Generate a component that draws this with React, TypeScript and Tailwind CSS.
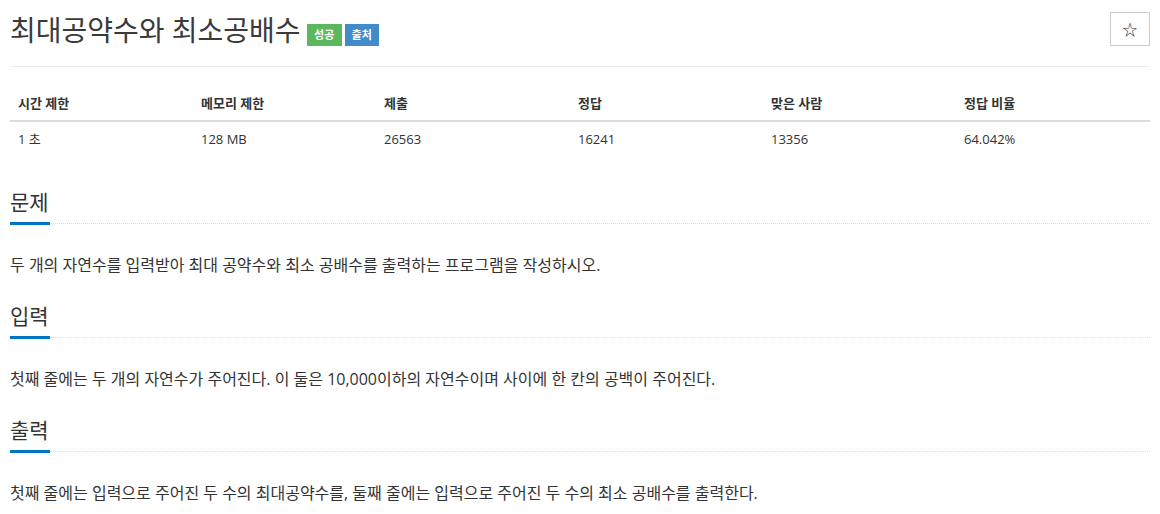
import React from "react";

const COLS = [
  { head: "시간 제한", value: "1 초", w: "w-[183px]" },
  { head: "메모리 제한", value: "128 MB", w: "w-[183px]" },
  { head: "제출", value: "26563", w: "w-[194px]" },
  { head: "정답", value: "16241", w: "w-[193px]" },
  { head: "맞은 사람", value: "13356", w: "w-[193px]" },
  { head: "정답 비율", value: "64.042%", w: "flex-1" },
];

function Section({ title, text, first }: { title: string; text: string; first?: boolean }) {
  return (
    <section className={first ? "mt-[32px]" : "mt-[25px]"}>
      <div className="flex items-end">
        <h2 className="text-[21px] leading-[28px] text-[#333] pb-[6px] border-b-[3px] border-[#0076c0] w-[40px] whitespace-nowrap">
          {title}
        </h2>
        <div className="flex-1 border-b border-dotted border-[#ddd] mb-[1px]" />
      </div>
      <p className="mt-[28px] text-[16px] leading-[24px] text-[#333]">{text}</p>
    </section>
  );
}

export default function App() {
  return (
    <div
      className="bg-white px-[10px] pt-[12px] text-[#333]"
      style={{ fontFamily: '"Open Sans", "Noto Sans CJK KR", sans-serif' }}
    >
      {/* Title */}
      <div className="flex items-start justify-between pb-[18px] border-b border-[#eee]">
        <div className="flex items-start gap-[6px]">
          <h1 className="text-[28px] leading-[36px] text-[#3a3a3a]">최대공약수와 최소공배수</h1>
          <div className="flex gap-[3px] mt-[12px]">
            <span className="bg-[#5cb85c] text-white text-[11px] font-bold leading-[22px] w-[35px] text-center">
              성공
            </span>
            <span className="bg-[#428bca] text-white text-[11px] font-bold leading-[22px] w-[34px] text-center">
              출처
            </span>
          </div>
        </div>
        <button className="w-[40px] h-[34px] border border-[#ccc] bg-white flex items-center justify-center text-[15px] text-[#333]">
          ☆
        </button>
      </div>

      {/* Info table */}
      <div className="mt-[19px] text-[13px]">
        <div className="flex border-b-2 border-[#ddd]">
          {COLS.map((c) => (
            <div key={c.head} className={`${c.w} px-[8px] py-[8px] font-bold leading-[18px]`}>
              {c.head}
            </div>
          ))}
        </div>
        <div className="flex">
          {COLS.map((c) => (
            <div key={c.head} className={`${c.w} px-[8px] py-[8px] leading-[18px]`}>
              {c.value}
            </div>
          ))}
        </div>
      </div>

      <Section
        first
        title="문제"
        text="두 개의 자연수를 입력받아 최대 공약수와 최소 공배수를 출력하는 프로그램을 작성하시오."
      />
      <Section
        title="입력"
        text="첫째 줄에는 두 개의 자연수가 주어진다. 이 둘은 10,000이하의 자연수이며 사이에 한 칸의 공백이 주어진다."
      />
      <Section
        title="출력"
        text="첫째 줄에는 입력으로 주어진 두 수의 최대공약수를, 둘째 줄에는 입력으로 주어진 두 수의 최소 공배수를 출력한다."
      />
    </div>
  );
}
